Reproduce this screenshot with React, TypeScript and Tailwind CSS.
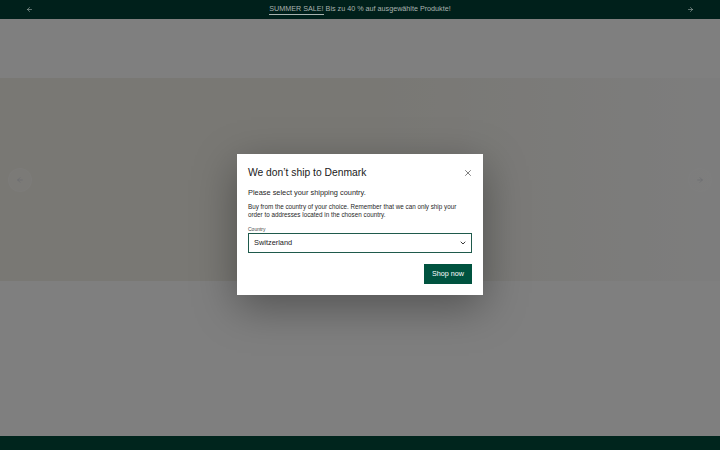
import React, { useState } from 'react';
import { ArrowLeft, ArrowRight, X, ChevronDown } from 'lucide-react';

const countries = ['Switzerland', 'Denmark', 'Germany', 'Austria', 'France'];

export default function App() {
  const [country, setCountry] = useState('Switzerland');
  const [open, setOpen] = useState(true);

  return (
    <div className="relative h-[450px] w-[720px] overflow-hidden bg-white font-['Liberation_Sans',Arial,sans-serif]">
      {/* Promo banner */}
      <div className="flex h-[19px] items-center justify-between bg-[#00201b] px-[26px] text-[#a9b3b0]">
        <ArrowLeft className="h-[7px] w-[7px]" strokeWidth={2} />
        <p className="text-[7.2px]">
          <span className="border-b border-[#a9b3b0] pb-[1px]">SUMMER SALE!</span> Bis zu 40 % auf ausgewählte Produkte!
        </p>
        <ArrowRight className="h-[7px] w-[7px]" strokeWidth={2} />
      </div>

      {/* Page behind the overlay */}
      <div className="h-[59px] bg-white" />
      <div className="relative flex h-[203px] items-center justify-between bg-gradient-to-r from-[#f3f0e8] via-[#f2f0e8] to-[#fbfbfb] px-[8px]">
        <div className="flex h-[24px] w-[24px] items-center justify-center rounded-full border border-white/20 bg-white/30">
          <ArrowLeft className="h-[8px] w-[8px] text-gray-300" />
        </div>
        <div className="flex h-[24px] w-[24px] items-center justify-center rounded-full border border-white/20 bg-white/30">
          <ArrowRight className="h-[8px] w-[8px] text-gray-300" />
        </div>
      </div>
      <div className="h-[155px] bg-white" />
      <div className="h-[14px] bg-[#004a3b]" />

      {open && (
        <div className="absolute inset-x-0 bottom-0 top-[19px] flex items-start justify-center bg-black/50">
          <div className="mt-[135px] w-[246px] bg-white px-[11px] pb-[11px] pt-[11px] shadow-[0_12px_40px_rgba(0,0,0,0.35)]">
            <div className="flex items-center justify-between">
              <h2 className="text-[10.3px] leading-[16px] text-[#1a1a1a]">We don’t ship to Denmark</h2>
              <button onClick={() => setOpen(false)} className="mr-[-1px] text-[#333]">
                <X className="h-[10px] w-[10px]" strokeWidth={1.5} />
              </button>
            </div>
            <p className="mt-[6px] text-[7.4px] leading-[11px] text-[#1f1f1f]">Please select your shipping country.</p>
            <p className="mt-[5px] text-[6.3px] leading-[8px] text-[#1f1f1f]">
              Buy from the country of your choice. Remember that we can only ship your order to addresses located in the chosen country.
            </p>
            <label className="mt-[7px] block text-[5px] leading-[6px] text-[#444]">Country</label>
            <div className="relative mt-[1px]">
              <select
                value={country}
                onChange={e => setCountry(e.target.value)}
                className="block h-[20px] w-full appearance-none border border-[#1f5a4c] bg-white pl-[5px] text-[7.4px] text-[#1a1a1a] outline-none"
              >
                {countries.map(c => (
                  <option key={c} value={c}>{c}</option>
                ))}
              </select>
              <ChevronDown className="pointer-events-none absolute right-[5px] top-1/2 h-[8px] w-[8px] -translate-y-1/2 text-[#111]" strokeWidth={2.5} />
            </div>
            <div className="mt-[11px] flex justify-end">
              <button className="h-[20px] bg-[#00533f] px-[8px] text-[7.2px] text-white">Shop now</button>
            </div>
          </div>
        </div>
      )}
    </div>
  );
}
